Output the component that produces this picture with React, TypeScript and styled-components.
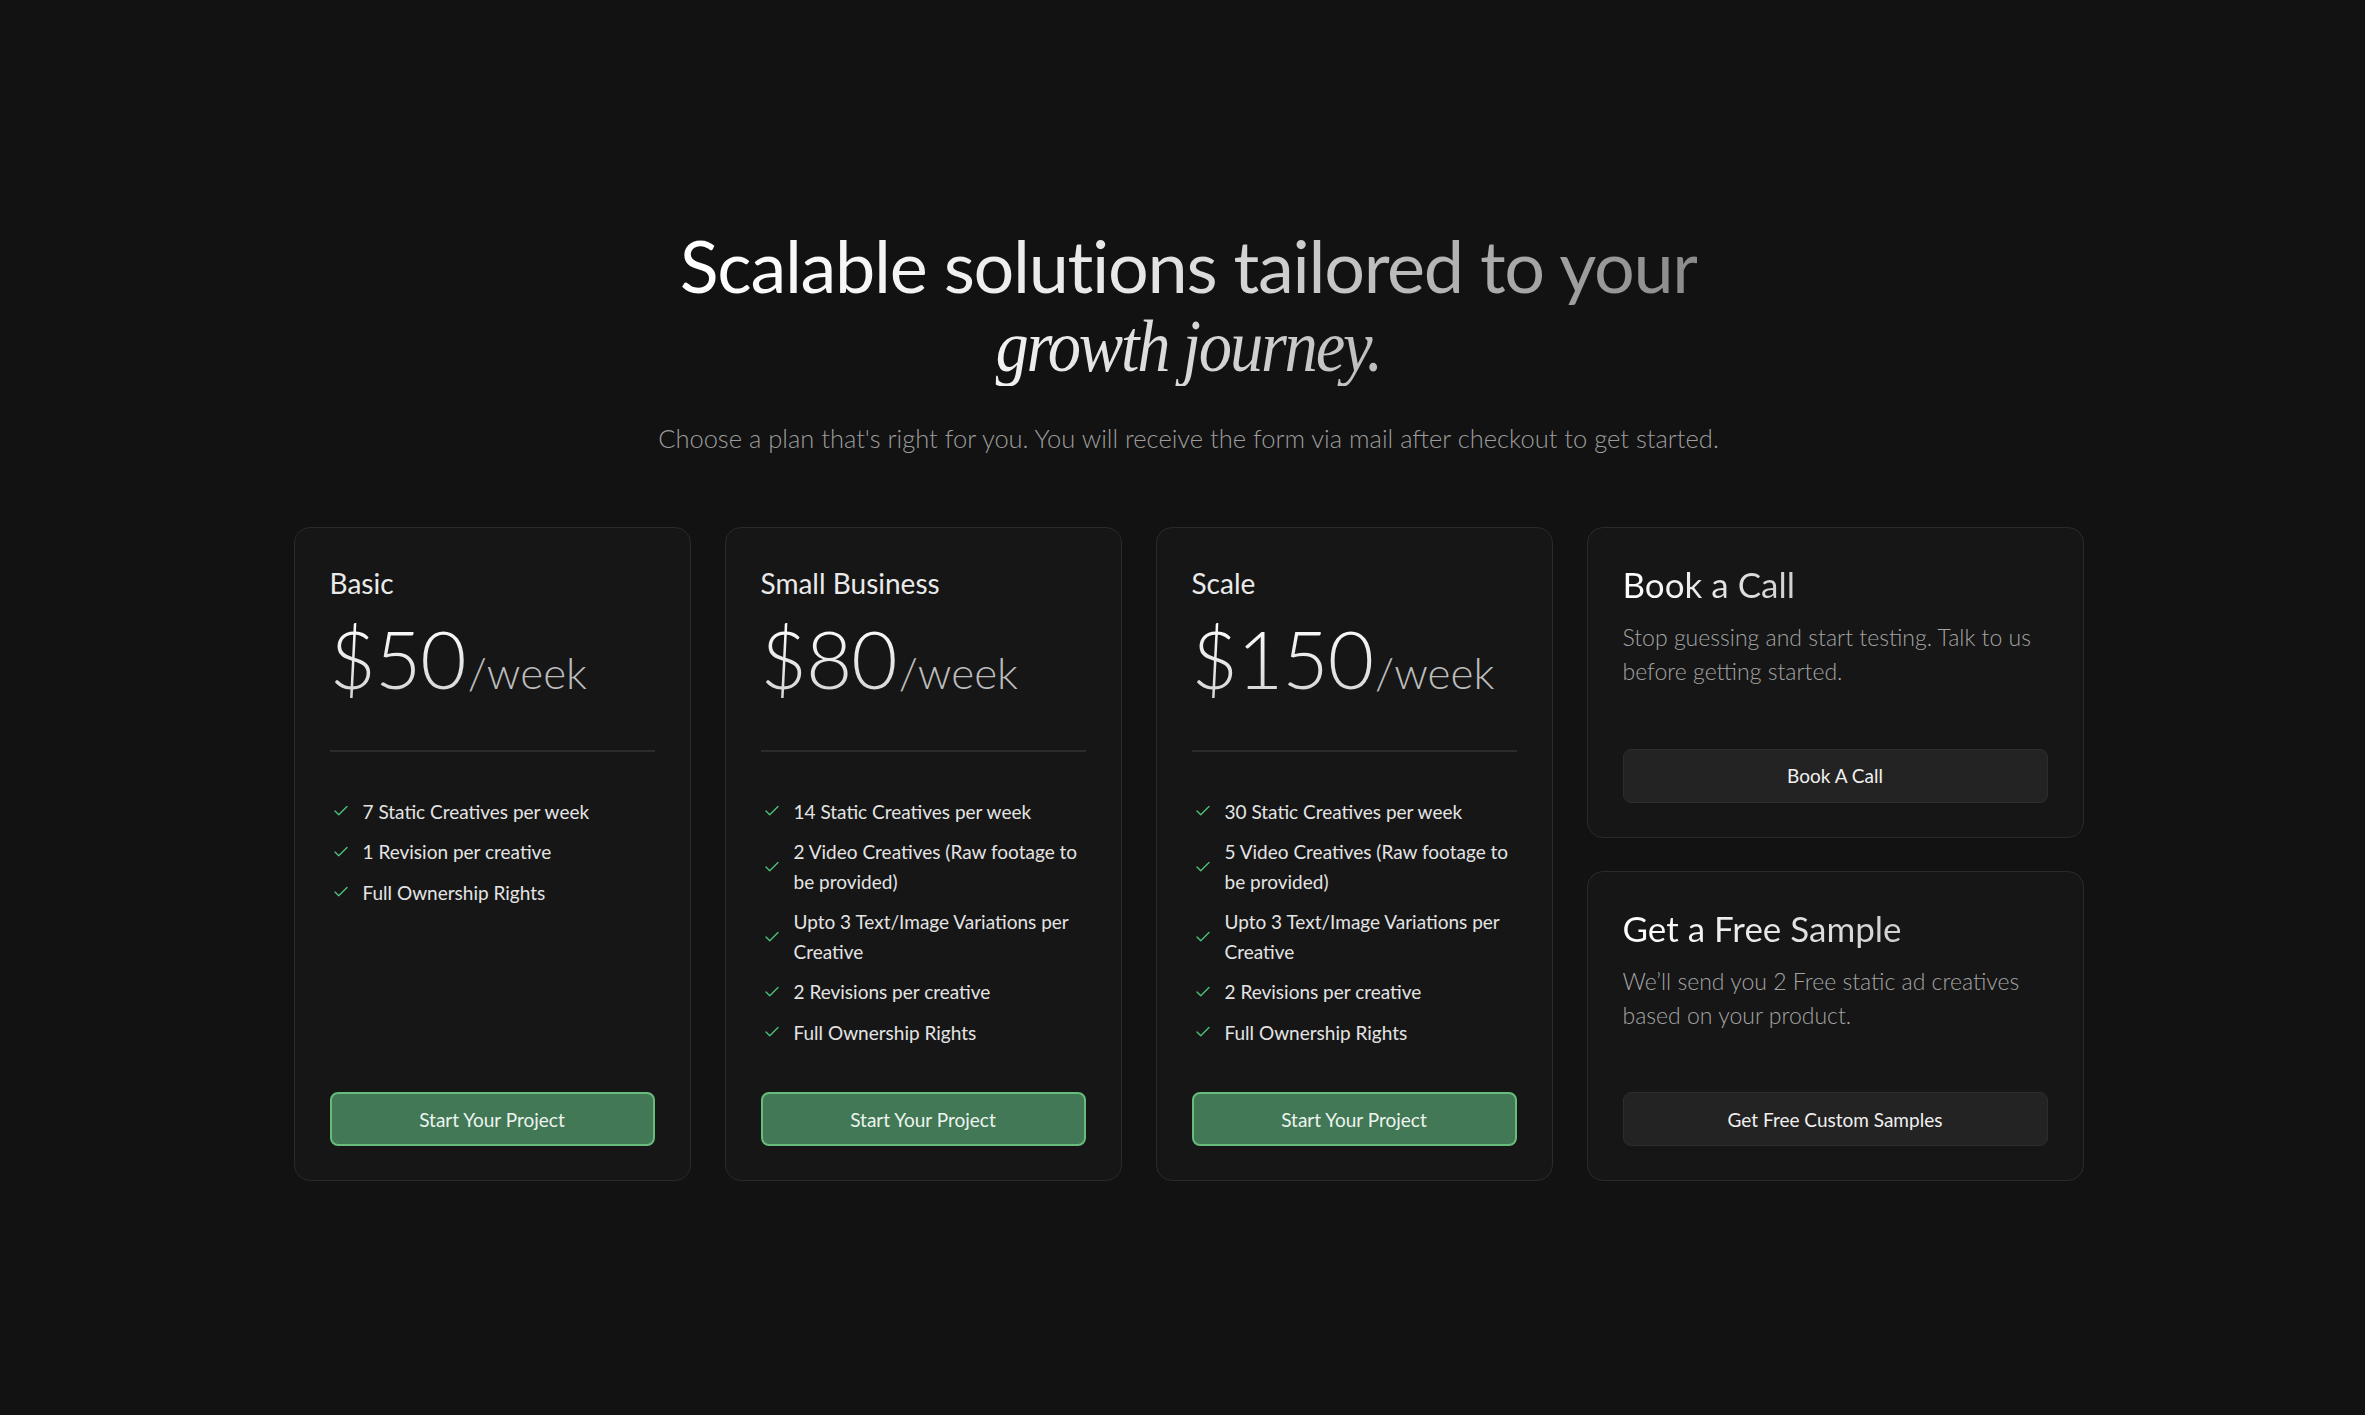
import styled, { createGlobalStyle } from "styled-components";
import { Check } from "lucide-react";

const GlobalStyle = createGlobalStyle`
  html, body {
    margin: 0;
    padding: 0;
    background: #121212;
  }
  body {
    font-family: Lato, "Open Sans", sans-serif;
    color: #e8e8e8;
  }
`;

type Plan = {
  name: string;
  price: string;
  features: string[];
};

const plans: Plan[] = [
  {
    name: "Basic",
    price: "$50",
    features: [
      "7 Static Creatives per week",
      "1 Revision per creative",
      "Full Ownership Rights",
    ],
  },
  {
    name: "Small Business",
    price: "$80",
    features: [
      "14 Static Creatives per week",
      "2 Video Creatives (Raw footage to be provided)",
      "Upto 3 Text/Image Variations per Creative",
      "2 Revisions per creative",
      "Full Ownership Rights",
    ],
  },
  {
    name: "Scale",
    price: "$150",
    features: [
      "30 Static Creatives per week",
      "5 Video Creatives (Raw footage to be provided)",
      "Upto 3 Text/Image Variations per Creative",
      "2 Revisions per creative",
      "Full Ownership Rights",
    ],
  },
];

const extras = [
  {
    title: "Book a Call",
    text: "Stop guessing and start testing. Talk to us before getting started.",
    cta: "Book A Call",
  },
  {
    title: "Get a Free Sample",
    text: "We’ll send you 2 Free static ad creatives based on your product.",
    cta: "Get Free Custom Samples",
  },
];

const App = () => {
  return (
    <Page>
      <GlobalStyle />
      <Header>
        <Title>
          <TitleLine>Scalable solutions tailored to your</TitleLine>
          <TitleItalic>growth journey.</TitleItalic>
        </Title>
        <Subtitle>
          Choose a plan that's right for you. You will receive the form via
          mail after checkout to get started.
        </Subtitle>
      </Header>

      <Grid>
        {plans.map((plan) => (
          <PlanCard key={plan.name}>
            <PlanName>{plan.name}</PlanName>
            <Price>
              <Amount>{plan.price}</Amount>
              <Per>/week</Per>
            </Price>
            <Divider />
            <Features>
              {plan.features.map((f) => (
                <Feature key={f}>
                  <Check size={18} strokeWidth={1.8} color="#4cc27a" />
                  <span>{f}</span>
                </Feature>
              ))}
            </Features>
            <GreenButton>Start Your Project</GreenButton>
          </PlanCard>
        ))}

        <SideColumn>
          {extras.map((e) => (
            <SideCard key={e.title}>
              <SideTitle>{e.title}</SideTitle>
              <SideText>{e.text}</SideText>
              <DarkButton>{e.cta}</DarkButton>
            </SideCard>
          ))}
        </SideColumn>
      </Grid>
    </Page>
  );
};

export default App;

const Page = styled.main`
  min-height: 1415px;
  box-sizing: border-box;
  padding: 224px 0 0 12px;
  display: flex;
  flex-direction: column;
  align-items: center;
  background: #121212;
`;

const Header = styled.header`
  display: flex;
  flex-direction: column;
  align-items: center;
  text-align: center;
`;

const Title = styled.h1`
  margin: 0;
  display: flex;
  flex-direction: column;
  align-items: center;
  font-weight: 400;
`;

const TitleLine = styled.span`
  font-family: Lato, sans-serif;
  font-size: 72px;
  line-height: 82px;
  letter-spacing: -1.3px;
  background: linear-gradient(90deg, #ffffff 0%, #e6e6e6 45%, #8a8a8a 100%);
  -webkit-background-clip: text;
  background-clip: text;
  color: transparent;
`;

const TitleItalic = styled.span`
  display: inline-block;
  font-family: "Liberation Serif", serif;
  font-style: italic;
  font-size: 74px;
  line-height: 80px;
  letter-spacing: -2.5px;
  transform: scaleX(0.9);
  background: linear-gradient(90deg, #f2f2f2 0%, #bdbdbd 100%);
  -webkit-background-clip: text;
  background-clip: text;
  color: transparent;
`;

const Subtitle = styled.p`
  margin: 37px 0 0;
  font-size: 25.5px;
  font-weight: 300;
  color: #9d9d9d;
`;

const Grid = styled.section`
  margin-top: 74px;
  display: grid;
  grid-template-columns: 397px 397px 397px 497px;
  gap: 34px;
`;

const CardBase = styled.div`
  box-sizing: border-box;
  background: #161616;
  border: 1.5px solid #2a2a2a;
  border-radius: 16px;
  padding: 39px 35px 34px;
  display: flex;
  flex-direction: column;
`;

const PlanCard = styled(CardBase)``;

const PlanName = styled.div`
  font-size: 28px;
  line-height: 32px;
  color: #eaeaea;
`;

const Price = styled.div`
  margin-top: 19px;
  display: flex;
  align-items: baseline;
  line-height: 1;
`;

const Amount = styled.span`
  font-size: 80px;
  font-weight: 300;
  letter-spacing: -1px;
  background: linear-gradient(180deg, #ffffff 0%, #d4d4d4 100%);
  -webkit-background-clip: text;
  background-clip: text;
  color: transparent;
`;

const Per = styled.span`
  font-size: 44px;
  font-weight: 300;
  color: #bcbcbc;
  margin-left: 2px;
`;

const Divider = styled.hr`
  margin: 52px 0 0;
  border: none;
  height: 1.5px;
  background: #2c2c2c;
`;

const Features = styled.ul`
  list-style: none;
  margin: 45px 0 45px;
  padding: 0;
  display: flex;
  flex-direction: column;
  gap: 11px;
`;

const Feature = styled.li`
  display: flex;
  align-items: center;
  gap: 13px;
  padding-left: 2px;
  font-size: 19px;
  line-height: 29.5px;
  color: #e4e4e4;

  svg {
    flex-shrink: 0;
  }
`;

const ButtonBase = styled.button`
  margin-top: auto;
  height: 54px;
  width: 100%;
  border-radius: 8px;
  font-family: Lato, sans-serif;
  font-size: 19px;
  cursor: pointer;
`;

const GreenButton = styled(ButtonBase)`
  background: #427855;
  border: 2px solid #66bb7d;
  color: #edf4ef;
`;

const DarkButton = styled(ButtonBase)`
  background: #232323;
  border: 1.5px solid #2d2d2d;
  color: #f0f0f0;
`;

const SideColumn = styled.div`
  display: grid;
  grid-template-rows: 1fr 1fr;
  gap: 33px;
`;

const SideCard = styled(CardBase)`
  padding-top: 36px;
`;

const SideTitle = styled.div`
  font-size: 35px;
  line-height: 40px;
  background: linear-gradient(90deg, #ffffff 0%, #d0d0d0 100%);
  -webkit-background-clip: text;
  background-clip: text;
  color: transparent;
  align-self: flex-start;
`;

const SideText = styled.p`
  margin: 16px 0 0;
  font-size: 23px;
  line-height: 34px;
  font-weight: 300;
  color: #a4a4a4;
  max-width: 420px;
`;
